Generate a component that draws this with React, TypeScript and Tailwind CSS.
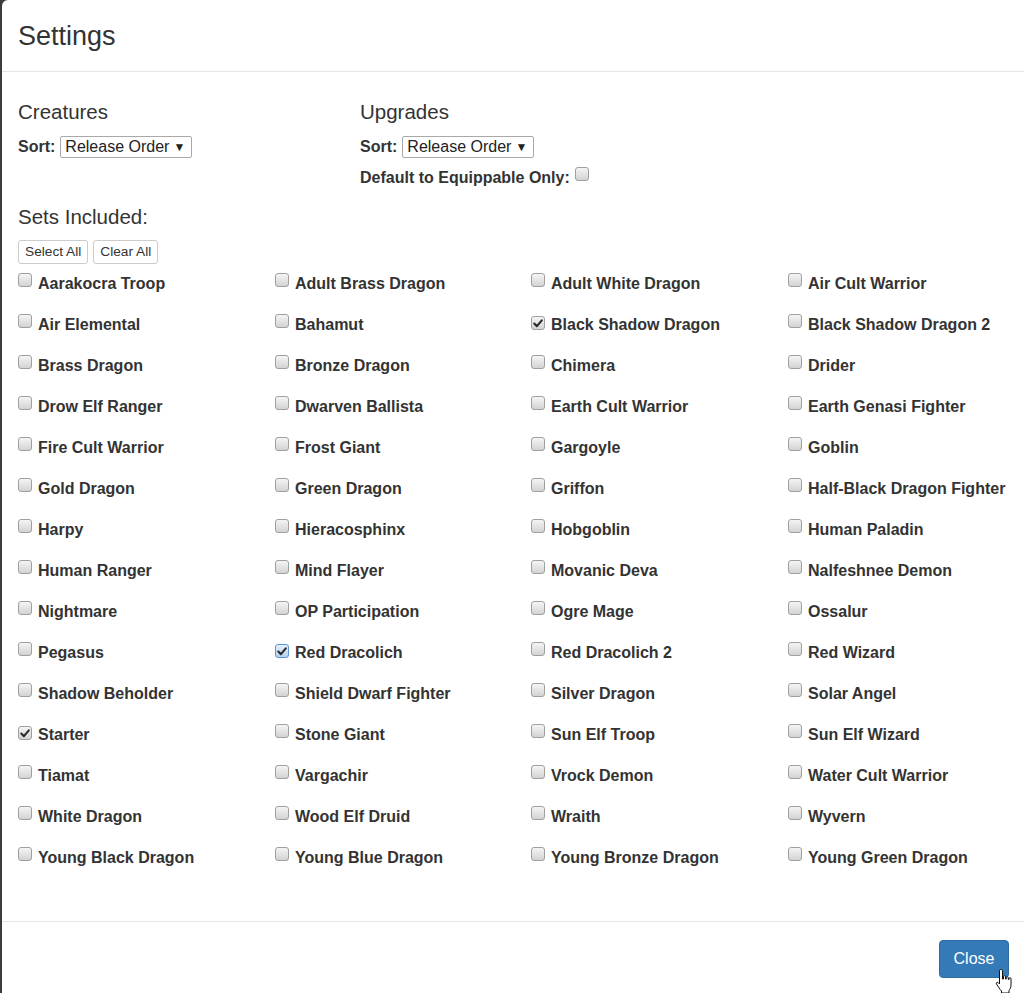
import React from "react";

const items: [string, number][] = [
  ["Aarakocra Troop", 0], ["Adult Brass Dragon", 0], ["Adult White Dragon", 0], ["Air Cult Warrior", 0],
  ["Air Elemental", 0], ["Bahamut", 0], ["Black Shadow Dragon", 1], ["Black Shadow Dragon 2", 0],
  ["Brass Dragon", 0], ["Bronze Dragon", 0], ["Chimera", 0], ["Drider", 0],
  ["Drow Elf Ranger", 0], ["Dwarven Ballista", 0], ["Earth Cult Warrior", 0], ["Earth Genasi Fighter", 0],
  ["Fire Cult Warrior", 0], ["Frost Giant", 0], ["Gargoyle", 0], ["Goblin", 0],
  ["Gold Dragon", 0], ["Green Dragon", 0], ["Griffon", 0], ["Half-Black Dragon Fighter", 0],
  ["Harpy", 0], ["Hieracosphinx", 0], ["Hobgoblin", 0], ["Human Paladin", 0],
  ["Human Ranger", 0], ["Mind Flayer", 0], ["Movanic Deva", 0], ["Nalfeshnee Demon", 0],
  ["Nightmare", 0], ["OP Participation", 0], ["Ogre Mage", 0], ["Ossalur", 0],
  ["Pegasus", 0], ["Red Dracolich", 2], ["Red Dracolich 2", 0], ["Red Wizard", 0],
  ["Shadow Beholder", 0], ["Shield Dwarf Fighter", 0], ["Silver Dragon", 0], ["Solar Angel", 0],
  ["Starter", 1], ["Stone Giant", 0], ["Sun Elf Troop", 0], ["Sun Elf Wizard", 0],
  ["Tiamat", 0], ["Vargachir", 0], ["Vrock Demon", 0], ["Water Cult Warrior", 0],
  ["White Dragon", 0], ["Wood Elf Druid", 0], ["Wraith", 0], ["Wyvern", 0],
  ["Young Black Dragon", 0], ["Young Blue Dragon", 0], ["Young Bronze Dragon", 0], ["Young Green Dragon", 0],
];

function Box({ state }: { state: number }) {
  const focused = state === 2;
  const checked = state >= 1;
  return (
    <span
      className={
        "relative inline-flex h-[14px] w-[14px] shrink-0 items-center justify-center rounded-[3px] border " +
        (focused
          ? "border-[#5b95d3] bg-linear-to-b from-[#e6f0fb] to-[#b7d2ee]"
          : "border-[#9f9f9f] bg-linear-to-b from-[#f5f5f5] to-[#d3d3d3]")
      }
    >
      {checked && (
        <svg width="10" height="9" viewBox="0 0 10 9" className="block">
          <path d="M1.3 4.6 L3.9 7.2 L8.8 1.3" fill="none" stroke="#2a2a2a" strokeWidth="2.1" strokeLinecap="round" strokeLinejoin="round" />
        </svg>
      )}
    </span>
  );
}

function Select() {
  return (
    <div className="flex h-[22px] w-[132px] items-center justify-between rounded-[2px] border border-[#a9a9a9] bg-white pl-[4px] pr-[6px] text-[16px] font-normal text-[#222]">
      <span>Release Order</span>
      <span className="text-[12px] text-[#222]">▼</span>
    </div>
  );
}

export default function App() {
  return (
    <div
      className="flex h-[993px] w-[1024px] overflow-hidden bg-[#3c3c3c] text-[#333]"
      style={{ fontFamily: '"Liberation Sans", Arial, sans-serif' }}
    >
      <div className="ml-[2px] flex min-w-0 flex-1 flex-col overflow-hidden rounded-tl-[6px] bg-white">
        <div className="flex h-[72px] shrink-0 items-center border-b border-[#e5e5e5] pt-[2px] pl-[16px]">
          <h4 className="text-[27px] leading-none font-normal text-[#333]">Settings</h4>
        </div>
        <div className="flex flex-1 flex-col pt-[26px] pl-[16px]">
          <div className="flex">
            <div className="w-[342px]">
              <div className="h-[28px] text-[20.5px] leading-[28px]">Creatures</div>
              <div className="mt-[10px] flex h-[22px] items-center gap-[5px] text-[16px] font-bold">
                <span>Sort:</span>
                <Select />
              </div>
            </div>
            <div>
              <div className="h-[28px] text-[20.5px] leading-[28px]">Upgrades</div>
              <div className="mt-[10px] flex h-[22px] items-center gap-[5px] text-[16px] font-bold">
                <span>Sort:</span>
                <Select />
              </div>
              <div className="mt-[9px] flex h-[22px] items-center gap-[5px] text-[16px] font-bold">
                <span>Default to Equippable Only:</span>
                <span className="-mt-[4px]"><Box state={0} /></span>
              </div>
            </div>
          </div>
          <div className="mt-[14px] h-[28px] text-[20.5px] leading-[28px]">Sets Included:</div>
          <div className="mt-[9px] flex gap-[5px]">
            <button className="h-[24px] rounded-[3px] border border-[#ccc] bg-white px-[6px] text-[13.7px] text-[#333]">Select All</button>
            <button className="h-[24px] rounded-[3px] border border-[#ccc] bg-white px-[6px] text-[13.7px] text-[#333]">Clear All</button>
          </div>
          <div className="-mt-[1px] grid w-[1027px] grid-cols-[257px_256px_257px_257px]">
            {items.map(([name, st]) => (
              <div key={name} className="flex h-[41px] items-center gap-[6px] text-[16px] font-bold text-[#333]">
                <span className="-mt-[4px]"><Box state={st} /></span>
                <span>{name}</span>
              </div>
            ))}
          </div>
        </div>
        <div className="relative flex h-[72px] shrink-0 items-start justify-end border-t border-[#e5e5e5] pt-[18px] pr-[15px]">
          <button className="h-[38px] w-[70px] rounded-[4px] border border-[#2e6da4] bg-[#337ab7] text-[16px] text-white">Close</button>
          <svg className="absolute left-[993px] top-[46px]" width="22" height="26" viewBox="0 0 22 26">
            <path
              d="M6 1.5 C7 1.5 7.5 2 7.5 3 L7.5 11 L8.5 11 L8.5 8.5 C8.5 7.5 10.5 7.5 10.5 8.5 L10.5 11 L11.3 11 L11.3 9.5 C11.3 8.5 13.3 8.5 13.3 9.5 L13.3 11.5 L14 11.5 L14 10.5 C14 9.5 16 9.5 16 10.5 L16 17 C16 19.5 15 21 14 22.5 L14 25 L6.5 25 L6.5 23 C5 21.5 3 18.5 1.5 16 C0.8 15 1.8 13.8 3 14.5 L4.5 16 L4.5 3 C4.5 2 5 1.5 6 1.5 Z"
              fill="white"
              stroke="#111"
              strokeWidth="1"
              strokeLinejoin="round"
            />
          </svg>
        </div>
      </div>
    </div>
  );
}
